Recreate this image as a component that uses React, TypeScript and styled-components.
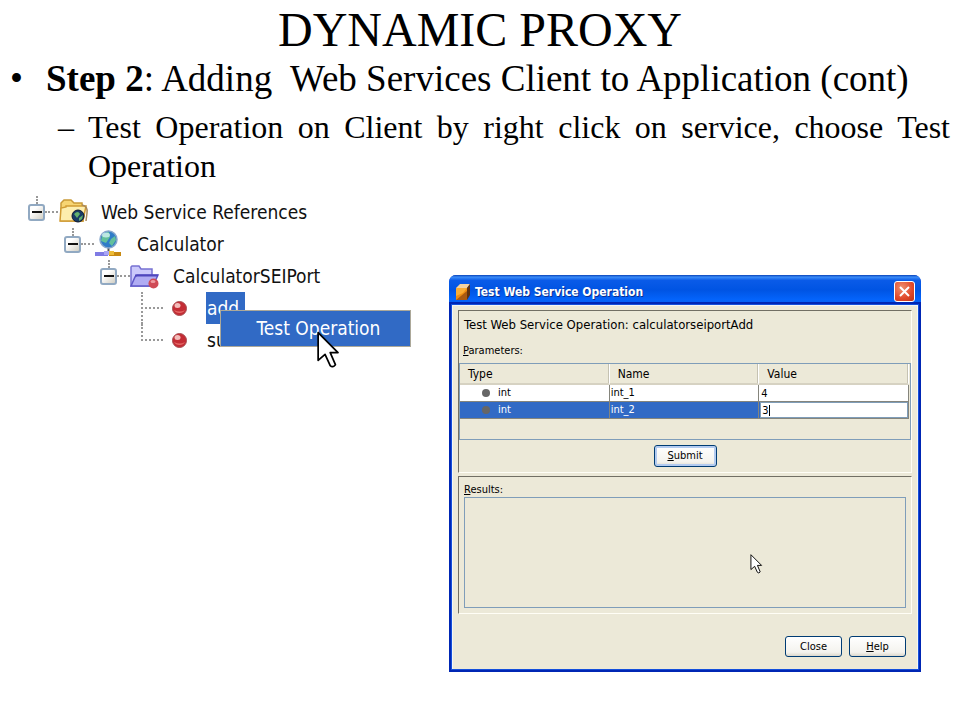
import React from "react";
import styled, { createGlobalStyle, css } from "styled-components";

const ui = `Tahoma, "DejaVu Sans Condensed", "Noto Sans", sans-serif`;

const GlobalStyle = createGlobalStyle`
  *, *::before, *::after { box-sizing: border-box; }
  body {
    margin: 0;
    background: #fff;
    color: #000;
    font-family: "Liberation Serif", "Times New Roman", serif;
  }
`;

const Slide = styled.main`
  display: flex;
  flex-direction: column;
  padding: 2px 10px 0;
`;

const Title = styled.h1`
  margin: 0;
  font-size: 48px;
  line-height: 56px;
  font-weight: 400;
  text-align: center;
`;

const Outline = styled.ul`
  margin: 0;
  padding: 0;
  list-style: none;
`;

const Step = styled.li`
  display: grid;
  grid-template-columns: 36px 1fr;
  font-size: 37px;
  line-height: 42px;
`;

const SubStep = styled.li`
  display: grid;
  grid-template-columns: 30px 1fr;
  margin-top: 8px;
  padding-left: 48px;
  font-size: 32px;
  line-height: 39px;
`;

const Justified = styled.span`
  text-align: justify;
`;

const Figures = styled.div`
  display: grid;
  grid-template-columns: 439px 1fr;
  align-items: start;
  padding: 10px 29px 0 0;
`;

const Tree = styled.ul`
  margin: 0;
  padding: 0 0 0 18px;
  list-style: none;
  font-family: ${ui};
  font-size: 19px;
`;

const stub = css`
  &::before {
    content: "";
    position: absolute;
    left: 8px;
    top: 0;
    height: 8px;
    border-left: 2px dotted #999;
  }
`;

const Node = styled.li<{ $level: number }>`
  position: relative;
  display: flex;
  align-items: center;
  height: 32px;
  margin-left: ${(p) => p.$level * 36}px;
  ${stub}
`;

const Leaf = styled.li<{ $last?: boolean }>`
  position: relative;
  display: flex;
  align-items: center;
  height: 32px;
  margin-left: 113px;
  &::before {
    content: "";
    position: absolute;
    left: 0;
    top: 0;
    height: ${(p) => (p.$last ? 17 : 32)}px;
    border-left: 2px dotted #999;
  }
`;

const Toggle = styled.button`
  display: grid;
  place-items: center;
  width: 17px;
  height: 17px;
  padding: 0;
  border: 2px solid #91a9c2;
  border-radius: 3px;
  background: linear-gradient(135deg, #fff 30%, #d2cfc4);
  &::before {
    content: "";
    width: 10px;
    height: 2px;
    background: #111;
  }
`;

const Dash = styled.span<{ $leaf?: boolean }>`
  width: ${(p) => (p.$leaf ? 22 : 13)}px;
  margin-right: ${(p) => (p.$leaf ? 8 : 0)}px;
  border-top: 2px dotted #999;
`;

const NodeIcon = styled.svg`
  width: 32px;
  height: 32px;
  margin-right: 10px;
`;

const BallIcon = styled.svg`
  width: 17px;
  height: 17px;
  margin-right: 18px;
`;

const Label = styled.span<{ $selected?: boolean }>`
  line-height: 32px;
  padding: 0 6px 0 1px;
  white-space: nowrap;
  color: ${(p) => (p.$selected ? "#fff" : "#111")};
  background: ${(p) => (p.$selected ? "#316ac5" : "transparent")};
`;

const ContextMenu = styled.div`
  position: absolute;
  z-index: 1;
  left: 79px;
  top: 18px;
  width: 191px;
  padding: 1px;
  border: 1px solid #aca899;
  background: #316ac5;
`;

const MenuItem = styled.button`
  width: 100%;
  padding: 0 0 0 6px;
  border: 0;
  background: none;
  color: #fff;
  font: 19px/33px ${ui};
`;

const MenuCursor = styled.svg`
  position: absolute;
  left: 95px;
  top: 20px;
  width: 25px;
  height: 38px;
`;

const Dialog = styled.section`
  margin-top: 79px;
  border-radius: 7px 7px 0 0;
  background: #0a3fd0;
  font-family: ${ui};
  font-size: 11px;
  line-height: 14px;
  overflow: hidden;
`;

const TitleBar = styled.header`
  display: flex;
  align-items: center;
  gap: 4px;
  height: 30px;
  padding: 3px 6px 0;
  background: linear-gradient(#0842b8 0, #3b8cf8 7%, #0a5be8 18%, #0054e3 50%, #0464fb 82%, #0560f4 92%, #0340b4);
`;

const DialogTitle = styled.h2`
  flex: 1;
  margin: 0;
  color: #fff;
  font-size: 12px;
  font-weight: 700;
  text-shadow: 1px 1px #0a2f90;
`;

const TitleIcon = styled.svg`
  width: 16px;
  height: 18px;
`;

const CloseBox = styled.button`
  display: grid;
  place-items: center;
  width: 21px;
  height: 21px;
  padding: 0;
  border: 1px solid #fff;
  border-radius: 3px;
  background: radial-gradient(circle at 35% 30%, #f0906f, #e0482a 60%, #bd3213);
`;

const DialogBody = styled.div`
  margin: 0 3px 3px 3px;
  border: 1px solid #f4f6f4;
  border-bottom: 0;
  padding: 4px 5px 12px 5px;
  background: #ece9d8;
  box-shadow: 0 0 0 1px #1450dc, 0 0 0 3px #0026b4;
`;

const Panel = styled.div`
  border: 1px solid #fffef6;
  border-top-color: #716f64;
  border-left-color: #716f64;
`;

const ParameterPanel = styled(Panel)`
  display: flex;
  flex-direction: column;
  padding-bottom: 5px;
`;

const OperationName = styled.p`
  margin: 0;
  padding: 6px 5px 0;
  font-size: 13px;
  line-height: 16px;
`;

const Caption = styled.div`
  padding: 11px 4px 5px;
`;

const TableFrame = styled.div`
  border: 1px solid #7f9db9;
  padding-right: 1px;
  padding-bottom: 20px;
`;

const Table = styled.table`
  width: 100%;
  border-collapse: separate;
  border-spacing: 0;
  table-layout: fixed;
`;

const HeadCell = styled.th`
  height: 21px;
  padding: 0 8px;
  border-right: 1px solid #fff;
  border-bottom: 2px solid #d6d2c2;
  box-shadow: inset -1px 0 #c5c2b2;
  text-align: left;
  font-weight: 400;
  font-size: 12px;
`;

const BodyRow = styled.tr<{ $selected?: boolean }>`
  background: ${(p) => (p.$selected ? "#316ac5" : "#fff")};
  color: ${(p) => (p.$selected ? "#fff" : "#000")};
`;

const Cell = styled.td`
  position: relative;
  height: 17px;
  padding: 0 0 0 1px;
  border-right: 1px solid #85857c;
  border-bottom: 1px solid #85857c;
  line-height: 16px;
`;

const TypeText = styled.span`
  display: flex;
  align-items: center;
  gap: 8px;
  padding-left: 21px;
`;

const Dot = styled.span`
  width: 8px;
  height: 8px;
  border-radius: 50%;
  background: #666;
`;

const ValueInput = styled.input<{ $editing?: boolean }>`
  display: block;
  width: 100%;
  height: 16px;
  padding: 0 1px;
  border: ${(p) => (p.$editing ? "1px solid #7f9db9" : "0")};
  background: #fff;
  color: #000;
  font: 11px/14px ${ui};
  outline: 0;
`;

const Caret = styled.span`
  position: absolute;
  left: 10px;
  top: 3px;
  width: 1px;
  height: 11px;
  background: #000;
`;

const Button = styled.button<{ $default?: boolean }>`
  width: ${(p) => (p.$default ? 63 : 57)}px;
  height: ${(p) => (p.$default ? 22 : 21)}px;
  padding: 0;
  border: 1px solid #003c74;
  border-radius: 3px;
  background: linear-gradient(#fff, #f4f3ee 80%, #dcd8cc);
  box-shadow: ${(p) => (p.$default ? "inset 0 0 0 2px #b3cbf0" : "none")};
  font: 11px/16px ${ui};
  color: #000;
`;

const SubmitRow = styled.div`
  display: flex;
  justify-content: center;
  padding-top: 5px;
`;

const ResultPanel = styled(Panel)`
  position: relative;
  margin-top: 3px;
  padding: 6px 5px 5px;
`;

const ResultLabel = styled.label`
  display: block;
`;

const ResultArea = styled.textarea`
  display: block;
  width: 100%;
  height: 111px;
  border: 1px solid #7f9db9;
  background: transparent;
  resize: none;
`;

const ResultCursor = styled.svg`
  position: absolute;
  left: 291px;
  top: 76px;
  width: 13px;
  height: 22px;
`;

const Actions = styled.div`
  display: flex;
  justify-content: flex-end;
  gap: 7px;
  padding: 22px 6px 0 0;
`;

const Pointer = () => (
  <path
    d="M1 1 V17 L5 13.5 L8 20 Q9.5 21.5 11 19.5 L8 12.5 H12.5 Z"
    fill="#fff"
    stroke="#000"
    strokeWidth="1"
    strokeLinejoin="round"
  />
);

const ReferencesIcon = () => (
  <NodeIcon viewBox="0 0 32 32" aria-hidden="true">
    <path d="M3 25V7l3-3h7l3 3h8l1 18z" fill="#f7d573" stroke="#c99a38" strokeWidth="1.5" />
    <path d="M2 25l1-13 5-1v-1h20l-3 15z" fill="#fdeeae" stroke="#d19c33" strokeWidth="1.5" />
    <path d="M24 9q6 1 5 8l-1 8" fill="none" stroke="#a98a5c" strokeWidth="1.5" />
    <circle cx="20" cy="20" r="6" fill="#173b66" stroke="#0b1730" />
    <path d="M16 18q4-4 6 0l-3 4zM21 22l4-3-1 4-3 2z" fill="#62b06d" />
  </NodeIcon>
);

const ServiceIcon = () => (
  <NodeIcon viewBox="0 0 32 32" aria-hidden="true">
    <path d="M14.5 20v5" stroke="#555" strokeWidth="2" />
    <circle cx="14.5" cy="11.5" r="8.5" fill="#2f7cc8" stroke="#87a6cc" strokeWidth="1.5" />
    <path d="M8 8q3-4 7-4l1 5-4 6-5-2zM17 11l4-3 1 4-4 6-3-3z" fill="#63c09c" />
    <ellipse cx="12" cy="7" rx="4" ry="2.5" fill="#d3f3f2" opacity=".8" />
    <path d="M1 26h13" stroke="#7f7be4" strokeWidth="4" />
    <path d="M15 26h12" stroke="#c88a12" strokeWidth="4" />
    <path d="M10 23h5v4h-5z" fill="#a9a6f5" />
    <path d="M15 23h5v4h-5z" fill="#edbc38" />
  </NodeIcon>
);

const PortIcon = () => (
  <NodeIcon viewBox="0 0 32 32" aria-hidden="true">
    <path d="M1 26V7l1-1h7l2 3h11v17z" fill="#cbc9fb" stroke="#7771d2" strokeWidth="1.5" />
    <path d="M1 26l4-9 2-2h21l-5 11z" fill="#b0acf3" stroke="#5f58c9" strokeWidth="1.5" />
    <path d="M5 15.5h23" stroke="#4f47bd" strokeWidth="2" />
    <circle cx="23.5" cy="23.5" r="5" fill="#cf4a55" />
    <ellipse cx="23" cy="21.5" rx="2.5" ry="1.5" fill="#ee9ba0" />
  </NodeIcon>
);

const MethodIcon = () => (
  <BallIcon viewBox="0 0 17 17" aria-hidden="true">
    <circle cx="8.5" cy="8.5" r="7" fill="#c42c34" stroke="#a84e52" />
    <path d="M3 10a6 5 0 0 0 11 0q-5 3-11 0" fill="#e66b68" />
    <ellipse cx="6.5" cy="5.5" rx="3" ry="2.5" fill="#f3bcba" />
  </BallIcon>
);

const rows = [
  { type: "int", name: "int_1", value: "4", editing: false },
  { type: "int", name: "int_2", value: "3", editing: true },
];

export default function App() {
  return (
    <>
      <GlobalStyle />
      <Slide>
        <Title>DYNAMIC PROXY</Title>
        <Outline>
          <Step>
            <span>•</span>
            <span>
              <b>Step 2</b>: Adding&nbsp; Web Services Client to Application (cont)
            </span>
          </Step>
          <SubStep>
            <span>–</span>
            <Justified>
              Test Operation on Client by right click on service, choose Test Operation
            </Justified>
          </SubStep>
        </Outline>
        <Figures>
          <Tree>
            <Node $level={0}>
              <Toggle aria-label="Collapse Web Service References" />
              <Dash />
              <ReferencesIcon />
              <Label>Web Service References</Label>
            </Node>
            <Node $level={1}>
              <Toggle aria-label="Collapse Calculator" />
              <Dash />
              <ServiceIcon />
              <Label>Calculator</Label>
            </Node>
            <Node $level={2}>
              <Toggle aria-label="Collapse CalculatorSEIPort" />
              <Dash />
              <PortIcon />
              <Label>CalculatorSEIPort</Label>
            </Node>
            <Leaf>
              <Dash $leaf />
              <MethodIcon />
              <Label $selected>add</Label>
              <ContextMenu>
                <MenuItem>Test Operation</MenuItem>
                <MenuCursor viewBox="0 0 14 22" aria-hidden="true">
                  <Pointer />
                </MenuCursor>
              </ContextMenu>
            </Leaf>
            <Leaf $last>
              <Dash $leaf />
              <MethodIcon />
              <Label>su</Label>
            </Leaf>
          </Tree>
          <Dialog role="dialog" aria-labelledby="dialog-title">
            <TitleBar>
              <TitleIcon viewBox="0 0 16 18" aria-hidden="true">
                <path d="M1 5l4-4h10l-3 4z" fill="#f2d2a0" />
                <path d="M1 5h11v12H1z" fill="#ee8d12" />
                <path d="M12 5l3-4v11l-3 5z" fill="#61320f" />
                <path d="M1 17l11-9v9z" fill="#a95a12" />
                <path d="M1 5h11l-4 5-7 3z" fill="#f8ac35" />
              </TitleIcon>
              <DialogTitle id="dialog-title">Test Web Service Operation</DialogTitle>
              <CloseBox aria-label="Close window">
                <svg width="13" height="13" viewBox="0 0 13 13" aria-hidden="true">
                  <path d="M2 2l9 9M11 2l-9 9" stroke="#fff" strokeWidth="2" />
                </svg>
              </CloseBox>
            </TitleBar>
            <DialogBody>
              <ParameterPanel>
                <OperationName>Test Web Service Operation: calculatorseiportAdd</OperationName>
                <Caption>
                  <u>P</u>arameters:
                </Caption>
                <TableFrame>
                  <Table>
                    <thead>
                      <tr>
                        <HeadCell>Type</HeadCell>
                        <HeadCell>Name</HeadCell>
                        <HeadCell>Value</HeadCell>
                      </tr>
                    </thead>
                    <tbody>
                      {rows.map((row) => (
                        <BodyRow key={row.name} $selected={row.editing}>
                          <Cell>
                            <TypeText>
                              <Dot />
                              {row.type}
                            </TypeText>
                          </Cell>
                          <Cell>{row.name}</Cell>
                          <Cell>
                            <ValueInput
                              aria-label={`Value of ${row.name}`}
                              defaultValue={row.value}
                              $editing={row.editing}
                            />
                            {row.editing && <Caret />}
                          </Cell>
                        </BodyRow>
                      ))}
                    </tbody>
                  </Table>
                </TableFrame>
                <SubmitRow>
                  <Button $default>
                    <u>S</u>ubmit
                  </Button>
                </SubmitRow>
              </ParameterPanel>
              <ResultPanel>
                <ResultLabel htmlFor="results">
                  <u>R</u>esults:
                </ResultLabel>
                <ResultArea id="results" readOnly />
                <ResultCursor viewBox="0 0 14 22" aria-hidden="true">
                  <Pointer />
                </ResultCursor>
              </ResultPanel>
              <Actions>
                <Button>Close</Button>
                <Button>
                  <u>H</u>elp
                </Button>
              </Actions>
            </DialogBody>
          </Dialog>
        </Figures>
      </Slide>
    </>
  );
}
